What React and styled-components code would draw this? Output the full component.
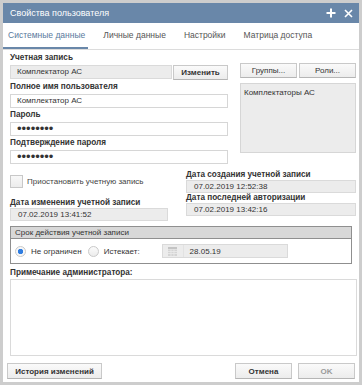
import React, { useState } from "react";
import styled, { createGlobalStyle } from "styled-components";

const GlobalStyle = createGlobalStyle`
  html, body {
    margin: 0;
    padding: 0;
    background: #cdcdcd;
  }
  body {
    font-family: "Liberation Sans", Arial, sans-serif;
    color: #333;
  }
`;

const tabs = ["Системные данные", "Личные данные", "Настройки", "Матрица доступа"];

function App() {
  const [active, setActive] = useState(0);
  const [unlimited, setUnlimited] = useState(true);

  return (
    <>
      <GlobalStyle />
      <Window>
        <TitleBar>
          <span>Свойства пользователя</span>
          <TitleIcons>
            <svg width="10" height="10" viewBox="0 0 10 10">
              <path d="M5 0.5v9M0.5 5h9" stroke="#fff" strokeWidth="2" />
            </svg>
            <svg width="9" height="9" viewBox="0 0 9 9">
              <path d="M1 1l7 7M8 1l-7 7" stroke="#fff" strokeWidth="1.6" />
            </svg>
          </TitleIcons>
        </TitleBar>

        <TabBar>
          {tabs.map((t, i) => (
            <Tab key={t} $active={i === active} onClick={() => setActive(i)}>
              {t}
            </Tab>
          ))}
        </TabBar>

        <Content>
          <TopGrid>
            <Column>
              <Label>Учетная запись</Label>
              <InputRow>
                <Input $readonly>Комплектатор АС</Input>
                <Button $bold $width="55px">Изменить</Button>
              </InputRow>
              <Label>Полное имя пользователя</Label>
              <Input>Комплектатор АС</Input>
              <Label>Пароль</Label>
              <Input $dots>••••••••</Input>
              <Label>Подтверждение пароля</Label>
              <Input $dots>••••••••</Input>
            </Column>
            <Column>
              <Spacer />
              <ButtonPair>
                <Button>Группы...</Button>
                <Button>Роли...</Button>
              </ButtonPair>
              <GroupList>Комплектаторы АС</GroupList>
            </Column>
          </TopGrid>

          <MidGrid>
            <Column>
              <CheckRow>
                <CheckBox />
                <span>Приостановить учетную запись</span>
              </CheckRow>
              <Label $compact>Дата изменения учетной записи</Label>
              <Input $readonly $compact>07.02.2019 13:41:52</Input>
            </Column>
            <Column>
              <Label $compact>Дата создания учетной записи</Label>
              <Input $readonly $compact>07.02.2019 12:52:38</Input>
              <Label $compact>Дата последней авторизации</Label>
              <Input $readonly $compact>07.02.2019 13:42:16</Input>
            </Column>
          </MidGrid>

          <ValidityBox>
            <ValidityHead>Срок действия учетной записи</ValidityHead>
            <ValidityBody>
              <RadioOption onClick={() => setUnlimited(true)}>
                <Radio $checked={unlimited} />
                <span>Не ограничен</span>
              </RadioOption>
              <RadioOption onClick={() => setUnlimited(false)}>
                <Radio $checked={!unlimited} />
                <span>Истекает:</span>
              </RadioOption>
              <DateField>
                <CalIcon>
                  <svg width="9" height="9" viewBox="0 0 9 9">
                    <rect x="0" y="0" width="9" height="2" fill="#c4c4c4" />
                    <rect x="0" y="2.5" width="9" height="6.5" fill="#d4d4d4" />
                    <path d="M0 4.5h9M0 6.5h9M3 2.5v6.5M6 2.5v6.5" stroke="#ececec" strokeWidth="0.8" />
                  </svg>
                </CalIcon>
                <span>28.05.19</span>
              </DateField>
            </ValidityBody>
          </ValidityBox>

          <Label $compact $top="4px">Примечание администратора:</Label>
          <Notes />
        </Content>

        <Footer>
          <Button $bold $tall $width="95px">История изменений</Button>
          <FooterRight>
            <Button $bold $tall $width="57px">Отмена</Button>
            <Button $bold $tall $disabled $width="57px">OK</Button>
          </FooterRight>
        </Footer>
      </Window>
    </>
  );
}

export default App;

const Window = styled.div`
  margin: 3px;
  width: 356px;
  height: 379px;
  background: #fff;
  display: flex;
  flex-direction: column;
  box-sizing: border-box;
  overflow: hidden;
`;

const TitleBar = styled.div`
  flex-shrink: 0;
  height: 20px;
  background: #6987a9;
  color: #fff;
  display: flex;
  align-items: center;
  justify-content: space-between;
  padding: 0 6px 0 7px;
  font-size: 9px;
`;

const TitleIcons = styled.div`
  display: flex;
  align-items: center;
  gap: 8px;
`;

const TabBar = styled.div`
  flex-shrink: 0;
  height: 27px;
  display: flex;
  align-items: stretch;
  border-bottom: 1px solid #dcdcdc;
  box-sizing: border-box;
`;

const Tab = styled.div`
  padding: 0 3px 0 5px;
  margin-right: 10px;
  display: flex;
  align-items: center;
  font-size: 8.5px;
  white-space: nowrap;
  color: ${(p) => (p.$active ? "#5a7a9d" : "#555")};
  border-bottom: 2px solid ${(p) => (p.$active ? "#6987a9" : "transparent")};
  cursor: pointer;
`;

const Content = styled.div`
  flex: none;
  padding: 2px 2px 0 7px;
  display: flex;
  flex-direction: column;
`;

const TopGrid = styled.div`
  display: grid;
  grid-template-columns: 218px 116px;
  column-gap: 12px;
`;

const MidGrid = styled.div`
  display: grid;
  grid-template-columns: 158px 170px;
  column-gap: 18px;
  margin-top: 5px;
`;

const Column = styled.div`
  display: flex;
  flex-direction: column;
`;

const Spacer = styled.div`
  height: 11px;
`;

const Label = styled.div`
  font-size: 8.2px;
  font-weight: bold;
  color: #333;
  height: ${(p) => (p.$compact ? "10px" : "12px")};
  line-height: ${(p) => (p.$compact ? "10px" : "12px")};
  margin-top: ${(p) => p.$top || "0"};
  margin-bottom: ${(p) => (p.$compact ? "0" : "1px")};
  white-space: nowrap;
`;

const InputRow = styled.div`
  display: flex;
  gap: 1px;
  margin-bottom: 1px;

  & > div:first-child {
    flex: 1;
    margin-bottom: 0;
  }
`;

const Input = styled.div`
  flex-shrink: 0;
  height: ${(p) => (p.$compact ? "13px" : "14px")};
  box-sizing: border-box;
  border: 1px solid ${(p) => (p.$readonly ? "#dadada" : "#d6d6d6")};
  background: ${(p) => (p.$readonly ? "#ececec" : "#fff")};
  font-size: ${(p) => (p.$dots ? "13px" : "8px")};
  line-height: ${(p) => (p.$compact ? "11px" : "12px")};
  padding-left: ${(p) => (p.$compact ? "7px" : "6px")};
  color: #333;
  margin-bottom: ${(p) => (p.$compact ? "0" : "1px")};
  white-space: nowrap;
  overflow: hidden;
`;

const Button = styled.div`
  flex-shrink: 0;
  height: ${(p) => (p.$tall ? "16px" : "15px")};
  box-sizing: border-box;
  width: ${(p) => p.$width || "auto"};
  flex: ${(p) => (p.$width ? "none" : "1")};
  border: 1px solid #c9c9c9;
  border-bottom-color: #b5b5b5;
  background: linear-gradient(#fafafa, #ececec);
  font-size: 8px;
  font-weight: ${(p) => (p.$bold ? "bold" : "normal")};
  color: ${(p) => (p.$disabled ? "#9a9a9a" : "#333")};
  display: flex;
  align-items: center;
  justify-content: center;
  cursor: pointer;
  white-space: nowrap;
`;

const ButtonPair = styled.div`
  display: flex;
  gap: 2px;
`;

const GroupList = styled.div`
  margin-top: 5px;
  height: 70px;
  box-sizing: border-box;
  border: 1px solid #d6d6d6;
  background: #ececec;
  font-size: 8px;
  padding: 4px 3px;
  color: #333;
`;

const CheckRow = styled.div`
  display: flex;
  align-items: center;
  gap: 4px;
  font-size: 8px;
  color: #444;
  height: 22px;
  margin-bottom: 6px;
`;

const CheckBox = styled.div`
  width: 13px;
  height: 13px;
  box-sizing: border-box;
  border: 1px solid #c8c8c8;
  background: linear-gradient(#f8f8f8, #ececec);
`;

const ValidityBox = styled.div`
  flex-shrink: 0;
  margin-top: 5px;
  border: 1px solid #8f8f8f;
  width: 342px;
  box-sizing: border-box;
`;

const ValidityHead = styled.div`
  height: 11px;
  background: #d8d8d8;
  border-bottom: 1px solid #8f8f8f;
  font-size: 8px;
  line-height: 11px;
  padding-left: 4px;
  color: #333;
`;

const ValidityBody = styled.div`
  height: 24px;
  display: flex;
  align-items: center;
  padding-left: 4px;
  font-size: 8px;
  color: #333;
`;

const RadioOption = styled.div`
  display: flex;
  align-items: center;
  gap: 5px;
  margin-right: 6px;
  cursor: pointer;
`;

const Radio = styled.div`
  width: 11px;
  height: 11px;
  border-radius: 50%;
  box-sizing: border-box;
  border: 1px solid #c9c9c9;
  background: ${(p) =>
    p.$checked
      ? "radial-gradient(circle, #2f7de0 0 2.4px, #f7f7f7 3px)"
      : "linear-gradient(#fbfbfb, #ececec)"};
`;

const DateField = styled.div`
  margin-left: 16px;
  width: 126px;
  height: 14px;
  box-sizing: border-box;
  border: 1px solid #dadada;
  background: #ececec;
  display: flex;
  align-items: center;
  font-size: 8px;
  color: #333;

  span {
    padding-left: 6px;
  }
`;

const CalIcon = styled.div`
  width: 20px;
  height: 12px;
  display: flex;
  align-items: center;
  justify-content: center;
  border-right: 1px solid #e2e2e2;
`;

const Notes = styled.div`
  flex-shrink: 0;
  height: 77px;
  border: 1px solid #dadada;
  box-sizing: border-box;
  margin-top: 1px;
`;

const Footer = styled.div`
  flex-shrink: 0;
  display: flex;
  justify-content: space-between;
  padding: 7px 4px 4px 4px;
`;

const FooterRight = styled.div`
  display: flex;
  gap: 6px;
`;
